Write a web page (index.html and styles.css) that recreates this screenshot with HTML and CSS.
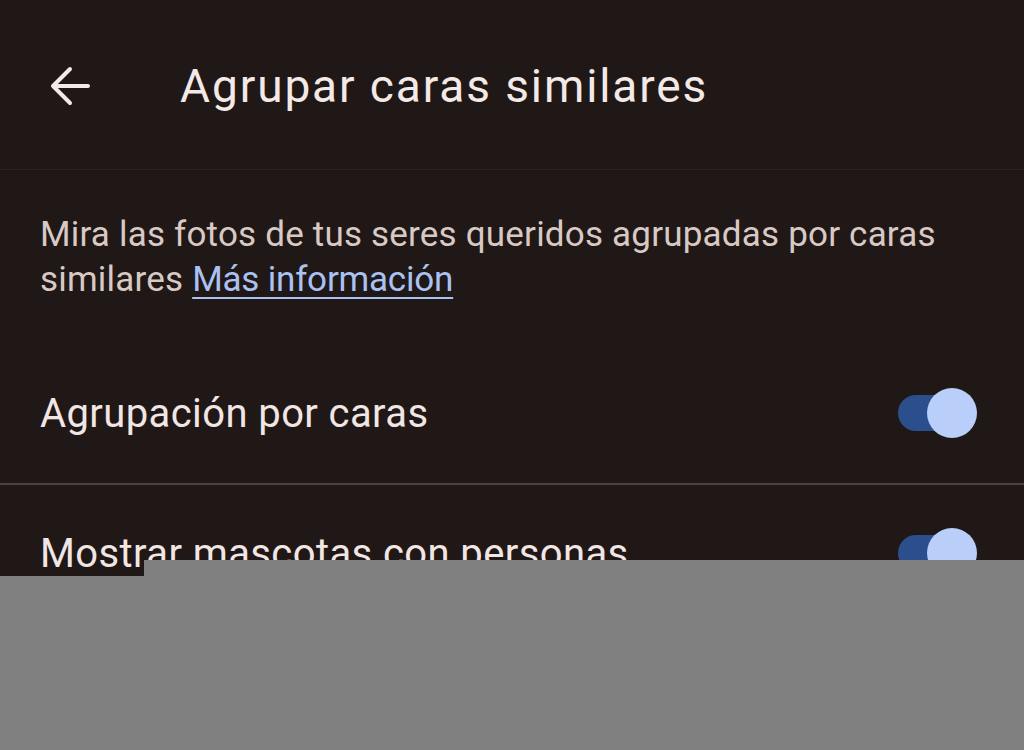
FILE: index.html
```html
<!DOCTYPE html>
<html lang="es">
<head>
<meta charset="utf-8">
<link rel="stylesheet" href="styles.css">
</head>
<body>
<div class="screen">
  <header class="topbar">
    <svg class="back" width="44" height="44" viewBox="0 0 44 44">
      <path d="M40 22H6M22 5L5 22l17 17" fill="none" stroke="#f3e9e6" stroke-width="4" stroke-linecap="round" stroke-linejoin="round"/>
    </svg>
    <h1 class="title">Agrupar caras similares</h1>
  </header>
  <p class="desc">Mira las fotos de tus seres queridos agrupadas por caras similares <a class="link" href="#">Más información</a></p>
  <div class="row first">
    <span class="label">Agrupación por caras</span>
    <span class="toggle"><span class="thumb"></span></span>
  </div>
  <div class="divider"></div>
  <div class="row second">
    <span class="label">Mostrar mascotas con personas</span>
    <span class="toggle"><span class="thumb"></span></span>
  </div>
  <div class="mask mask-a"></div>
  <div class="mask mask-b"></div>
</div>
</body>
</html>
```
FILE: styles.css
```css
html, body {
  margin: 0;
  padding: 0;
}
body {
  background: #201816;
  font-family: Roboto, "Noto Sans", sans-serif;
  color: #f2e8e5;
  width: 1024px;
  height: 750px;
  overflow: hidden;
}
.screen {
  position: relative;
  width: 1024px;
  height: 750px;
}
.topbar {
  display: flex;
  align-items: center;
  height: 170px;
  box-sizing: border-box;
  padding-left: 48px;
  border-bottom: 1px solid #2a2120;
}
.back {
  flex: none;
  margin-top: 2px;
}
.title {
  margin: 3px 0 0 88px;
  font-weight: 400;
  font-size: 46px;
  letter-spacing: 1.9px;
  color: #f3e9e6;
}
.desc {
  margin: 42px 40px 0 40px;
  font-size: 35px;
  line-height: 45px;
  letter-spacing: 0.2px;
  color: #d9c9c5;
}
.link {
  color: #aac2f2;
  letter-spacing: -0.2px;
  text-decoration: underline;
  text-decoration-thickness: 2px;
  text-underline-offset: 6px;
}
.row {
  display: flex;
  align-items: center;
  justify-content: space-between;
  padding: 0 48px 0 40px;
  height: 100px;
}
.row.first {
  margin-top: 61px;
}
.row.second {
  margin-top: 18px;
}
.label {
  font-size: 40px;
  letter-spacing: 0.4px;
  color: #f1e6e3;
}
.toggle {
  position: relative;
  width: 78px;
  height: 36px;
  border-radius: 18px;
  background: #2b4f8d;
}
.thumb {
  position: absolute;
  right: -1px;
  top: -7px;
  width: 50px;
  height: 50px;
  border-radius: 50%;
  background: #b9cef8;
}
.divider {
  height: 2px;
  background: #4b4240;
  margin-top: 20px;
}
.mask {
  position: absolute;
  background: #808080;
}
.mask-a {
  left: 144px;
  top: 560px;
  right: 0;
  bottom: 0;
}
.mask-b {
  left: 0;
  top: 576px;
  width: 144px;
  bottom: 0;
}
```
